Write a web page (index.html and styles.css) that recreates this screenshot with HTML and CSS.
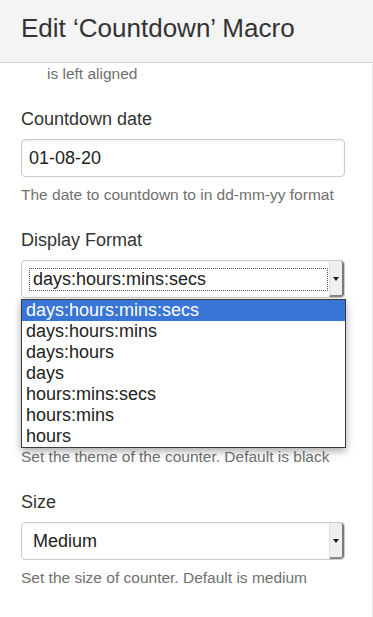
FILE: index.html
```html
<!DOCTYPE html>
<html lang="en">
<head>
    <meta charset="UTF-8">
    <meta name="viewport" content="width=device-width, initial-scale=1.0">
    <title>Edit Countdown Macro</title>
    <link rel="stylesheet" href="styles.css">
</head>
<body>
    <header class="header">
        <h1 class="header-title">Edit ‘Countdown’ Macro</h1>
    </header>

    <main class="macro-form">
        <p class="field-help field-help-tail">is left aligned</p>

        <div class="field">
            <label class="field-label" for="countdownDate">Countdown date</label>
            <input class="text-input" id="countdownDate" type="text" value="01-08-20">
            <p class="field-help">The date to countdown to in dd-mm-yy format</p>
        </div>

        <div class="field">
            <label class="field-label">Display Format</label>
            <div class="select-wrap">
                <div class="select focused">
                    <div class="select-value">days:hours:mins:secs</div>
                    <div class="select-arrow"></div>
                </div>
                <ul class="select-list">
                    <li class="select-option selected">days:hours:mins:secs</li>
                    <li class="select-option">days:hours:mins</li>
                    <li class="select-option">days:hours</li>
                    <li class="select-option">days</li>
                    <li class="select-option">hours:mins:secs</li>
                    <li class="select-option">hours:mins</li>
                    <li class="select-option">hours</li>
                </ul>
            </div>
            <!-- под открытым списком -->
            <p class="field-help covered">Set the format of the countdown. Default is days:hours:mins:secs</p>
        </div>

        <div class="field">
            <label class="field-label covered">Theme</label>
            <div class="select covered">
                <div class="select-value">Black</div>
                <div class="select-arrow"></div>
            </div>
            <p class="field-help">Set the theme of the counter. Default is black</p>
        </div>

        <div class="field">
            <label class="field-label">Size</label>
            <div class="select">
                <div class="select-value">Medium</div>
                <div class="select-arrow"></div>
            </div>
            <p class="field-help">Set the size of counter. Default is medium</p>
        </div>
    </main>
</body>
</html>
```

FILE: styles.css
```css
/* Common */
* {
    margin: 0;
    padding: 0;
    box-sizing: border-box;
    font-family: "Liberation Sans", Arial, sans-serif;
}

body {
    background: white;
    min-height: 100vh;
}

/* Dialog header */
.header {
    height: 63px;
    padding: 13px 21px 0;
    background: #f4f4f4;
    border-bottom: 1px solid #cfcfcf;
}

.header-title {
    font-size: 26px;
    line-height: 30px;
    font-weight: normal;
    color: #333;
}

/* Form */
.macro-form {
    padding: 0 27px 0 21px;
    border-right: 1px solid #e8e8e8;
    min-height: calc(100vh - 63px);
}

.field {
    margin-top: 24px;
}

.field-label {
    display: block;
    font-size: 18px;
    line-height: 22px;
    color: #333;
    margin-bottom: 9px;
}

.field-help {
    margin-top: 8px;
    font-size: 15.5px;
    line-height: 20px;
    color: #707070;
}

.field-help-tail {
    margin-top: 1px;
    padding-left: 26px;
}

/* Hidden behind the open option list */
.covered {
    visibility: hidden;
}

.text-input {
    display: block;
    width: 100%;
    height: 38px;
    padding: 0 7px;
    font-size: 18px;
    color: #222;
    border: 1px solid #ccc;
    border-radius: 4px;
    box-shadow: inset 0 1px 2px rgba(0, 0, 0, 0.08);
    outline: none;
}

/* Select box */
.select-wrap {
    position: relative;
}

.select {
    display: flex;
    height: 38px;
    border: 1px solid #ccc;
    border-radius: 4px;
    background: white;
    box-shadow: inset 0 1px 2px rgba(0, 0, 0, 0.06);
    overflow: hidden;
}

.select-value {
    flex: 1;
    margin: 7px 1px 6px 7px;
    padding: 0 3px;
    height: 23px;
    line-height: 21px;
    font-size: 18px;
    color: #222;
    border: 1px dotted transparent;
}

.select.focused .select-value {
    border-color: #555;
}

.select-arrow {
    width: 15px;
    display: flex;
    align-items: center;
    justify-content: center;
    background: #efefef;
    border-left: 1px solid #e2e2e2;
    border-right: 2px solid #7a7a7a;
    border-bottom: 2px solid #8a8a8a;
    border-radius: 0 3px 3px 0;
}

.select-arrow::after {
    content: "";
    border-left: 3.5px solid transparent;
    border-right: 3.5px solid transparent;
    border-top: 4px solid #1a1a1a;
    margin-top: 2px;
}

/* Open option list */
.select-list {
    position: absolute;
    top: 100%;
    left: 0;
    width: 325px;
    margin-top: 1px;
    list-style: none;
    background: white;
    border: 1px solid #3a3a3a;
    box-shadow: 0 3px 8px rgba(0, 0, 0, 0.35);
    z-index: 10;
}

.select-option {
    padding-left: 4px;
    font-size: 18px;
    line-height: 21px;
    color: #222;
    white-space: nowrap;
}

.select-option.selected {
    background: #3875d7;
    color: white;
}
```
